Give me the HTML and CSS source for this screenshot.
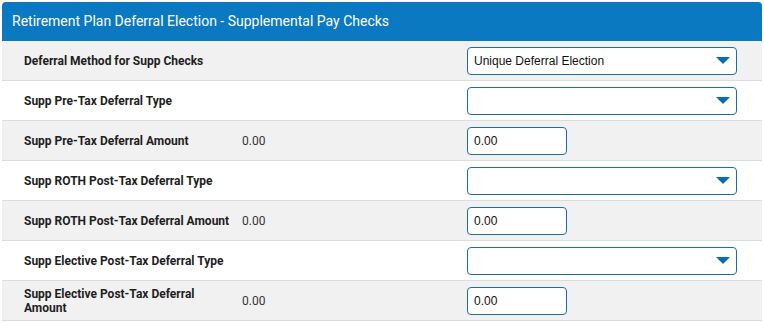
FILE: index.html
```html
<!DOCTYPE html>
<html lang="en">
<head>
    <meta charset="UTF-8">
    <meta name="viewport" content="width=device-width, initial-scale=1.0">
    <title>Supplemental Pay Checks</title>
    <link rel="stylesheet" href="styles.css">
</head>
<body>
    <div class="panel">
        <div class="panel-header">Retirement Plan Deferral Election - Supplemental Pay Checks</div>
        <div class="row shaded">
            <div class="label">Deferral Method for Supp Checks</div>
            <div class="value"></div>
            <div class="control">
                <div class="select">Unique Deferral Election<span class="caret"></span></div>
            </div>
        </div>
        <div class="row">
            <div class="label">Supp Pre-Tax Deferral Type</div>
            <div class="value"></div>
            <div class="control">
                <div class="select"><span class="caret"></span></div>
            </div>
        </div>
        <div class="row shaded">
            <div class="label">Supp Pre-Tax Deferral Amount</div>
            <div class="value">0.00</div>
            <div class="control">
                <div class="input">0.00</div>
            </div>
        </div>
        <div class="row">
            <div class="label">Supp ROTH Post-Tax Deferral Type</div>
            <div class="value"></div>
            <div class="control">
                <div class="select"><span class="caret"></span></div>
            </div>
        </div>
        <div class="row shaded">
            <div class="label">Supp ROTH Post-Tax Deferral Amount</div>
            <div class="value">0.00</div>
            <div class="control">
                <div class="input">0.00</div>
            </div>
        </div>
        <div class="row">
            <div class="label">Supp Elective Post-Tax Deferral Type</div>
            <div class="value"></div>
            <div class="control">
                <div class="select"><span class="caret"></span></div>
            </div>
        </div>
        <div class="row shaded">
            <div class="label">Supp Elective Post-Tax Deferral Amount</div>
            <div class="value">0.00</div>
            <div class="control">
                <div class="input">0.00</div>
            </div>
        </div>
    </div>
</body>
</html>
```

FILE: styles.css
```css
body {
    margin: 0;
    padding: 2px 2px 0 2px;
    background-color: #ffffff;
    font-family: Roboto, "Liberation Sans", sans-serif;
}
.panel {
    width: 760px;
}
.panel-header {
    background-color: #0a79c1;
    color: #ffffff;
    font-size: 14px;
    height: 39px;
    line-height: 38px;
    padding-left: 10px;
    border-radius: 4px 4px 0 0;
}
.row {
    display: grid;
    grid-template-columns: 240px 225px 1fr;
    align-items: center;
    height: 39px;
    border-bottom: 1px solid #dcdcdc;
    background-color: #ffffff;
}
.row.shaded {
    background-color: #f1f1f1;
}
.label {
    padding-left: 22px;
    padding-right: 8px;
    font-size: 12px;
    font-weight: bold;
    line-height: 14px;
    color: #1e1e1e;
}
.value {
    font-size: 12px;
    color: #333333;
}
.select, .input {
    box-sizing: border-box;
    height: 28px;
    background-color: #ffffff;
    border: 1px solid #1a6ea8;
    border-radius: 4px;
    font-family: "Liberation Sans", Arial, sans-serif;
    font-size: 12px;
    line-height: 26px;
    padding-left: 6px;
    color: #111111;
}
.select {
    width: 270px;
    display: flex;
    justify-content: space-between;
    align-items: center;
    padding-right: 6px;
}
.input {
    width: 100px;
}
.caret {
    margin-left: auto;
    width: 0;
    height: 0;
    border-left: 7px solid transparent;
    border-right: 7px solid transparent;
    border-top: 7px solid #0a6cb0;
}
```
